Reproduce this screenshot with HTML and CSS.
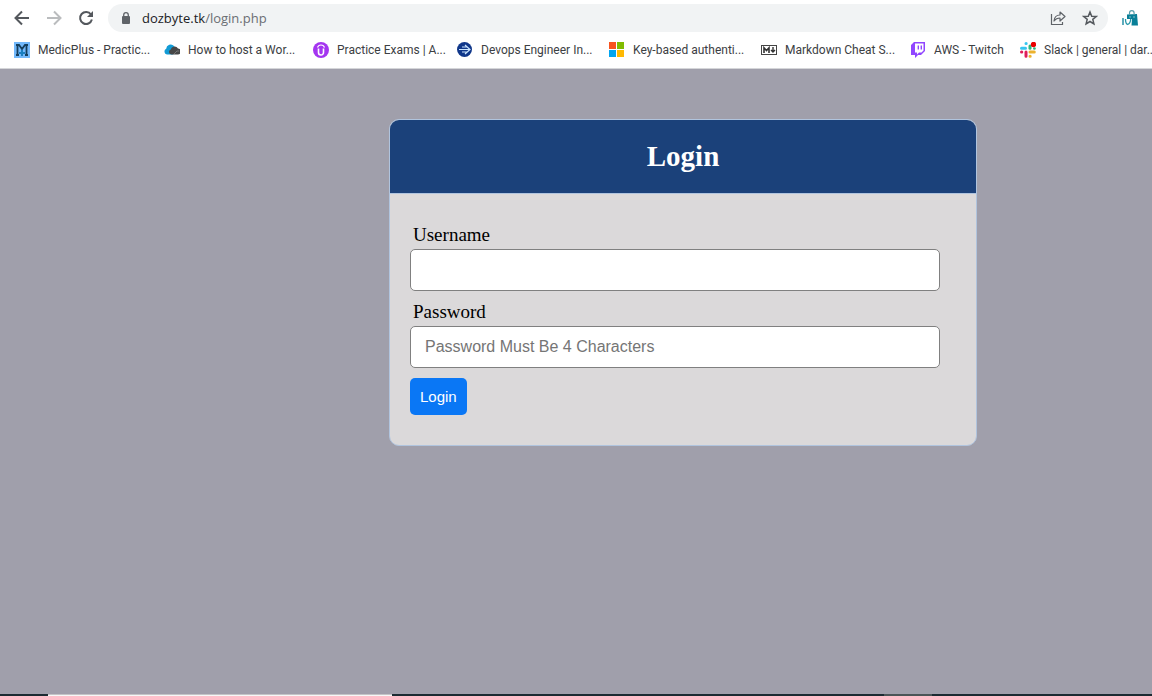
FILE: index.html
```html
<!DOCTYPE html>
<html lang="en">
<head>
<meta charset="utf-8">
<title>Login</title>
<meta name="viewport" content="width=device-width, initial-scale=1">
<link rel="stylesheet" href="styles.css">
</head>
<body>
<header class="browser">
  <div class="toolbar">
    <button class="tool" type="button" aria-label="Back"><svg viewBox="0 0 16 16" width="16" height="16" fill="none" stroke="#54585d" stroke-width="2"><path d="M15 8H2M8 1.500 1.500 8 8 14.500"/></svg></button>
    <button class="tool" type="button" aria-label="Forward"><svg viewBox="0 0 16 16" width="16" height="16" fill="none" stroke="#babcbe" stroke-width="2"><path d="M1 8h13M8 1.500 14.500 8 8 14.500"/></svg></button>
    <button class="tool" type="button" aria-label="Reload"><svg viewBox="0 0 16 16" width="16" height="16"><path d="M13 4.500A6 6 0 1 0 13.900 9.500" fill="none" stroke="#54585d" stroke-width="2"/><path d="M15 1v6H9z" fill="#54585d"/></svg></button>
    <div class="omnibox">
      <svg viewBox="0 0 10 12" width="10" height="12"><rect x="1" y="4" width="8" height="8" rx="1" fill="#5f6368"/><path d="M2.700 5V3a2.300 2.300 0 0 1 4.600 0v2" fill="none" stroke="#5f6368" stroke-width="1.300"/></svg>
      <p class="address">dozbyte.tk<span class="path">/login.php</span></p>
      <button class="tool" type="button" aria-label="Share"><svg viewBox="0 0 16 16" width="16" height="16" fill="none" stroke="#5f6368" stroke-width="1.200"><path d="M1.500 4v10.500h11V12"/><path d="M4 11c.4-4 2.500-6 6-6V2l5 4.500-5 4.500V8C7.500 8 5.500 9 4 11z" stroke-linejoin="round"/></svg></button>
      <button class="tool" type="button" aria-label="Bookmark this page"><svg viewBox="0 0 16 16" width="16" height="16" fill="none" stroke="#54585d" stroke-width="1.500"><path d="m8 2 1.700 4.200 4.600.3-3.500 2.900 1.100 4.500L8 11.500l-3.900 2.400 1.100-4.500-3.500-2.900 4.600-.3z"/></svg></button>
    </div>
    <button class="tool" type="button" aria-label="Shopping extension"><svg viewBox="0 0 16 16" width="16" height="16"><path d="M5 4.500 15 4l1 11.500H9.500L10 9H5z" fill="#087f98"/><path d="M7.500 5V3a2.300 2.300 0 0 1 4.600 0v2" fill="none" stroke="#5a9fad" stroke-width="1.200"/><path d="M1 8v7" stroke="#087f98" stroke-width="1.300"/><path d="M3.500 9c0 3.500.6 5 2.200 5.500 1.500-.6 2.800-2 3-5.500" fill="none" stroke="#2496a9" stroke-width="1.300"/><path d="M8 6.500v1m4-1v1" stroke="#fff"/></svg></button>
  </div>
  <nav class="bookmarks" aria-label="Bookmarks">
    <a class="bookmark" href="#"><svg viewBox="0 0 16 16" width="16" height="16"><path fill="#72b8fb" d="M0 0h16v16H0z"/><path d="M2 3h3l3 4 3-4h3M3.500 3v10M12.500 3v10M2 13h3m6 0h3" fill="none" stroke="#153e5c" stroke-width="1.800"/><path d="M8 8v6M5 11h6" stroke="#197fc0" stroke-width="2"/></svg>MedicPlus - Practic...</a>
    <a class="bookmark" href="#"><svg viewBox="0 0 16 16" width="16" height="16"><path d="M3 12.500a3 3 0 0 1-.8-5.700A4.500 4.500 0 0 1 10 4l2 5-3 3.500z" fill="#129bd5"/><path d="M7 12.500a2.600 2.600 0 0 1-.3-5A4 4 0 0 1 14 6.500a3 3 0 0 1-.5 6z" fill="#474747"/><path d="m10 12 3-3h2" stroke="#777" fill="none"/></svg>How to host a Wor...</a>
    <a class="bookmark" href="#"><svg viewBox="0 0 16 16" width="16" height="16"><circle cx="8" cy="8" r="8" fill="#a435f0"/><path d="M5.500 6.500v4a2.500 2.500 0 0 0 5 0v-4" fill="none" stroke="#fff" stroke-width="1.600"/><path d="M4.500 5.500C5 3.800 6.400 3 8 3s3 .8 3.500 2.500" fill="none" stroke="#fff" stroke-width="1.200"/></svg>Practice Exams | A...</a>
    <a class="bookmark" href="#"><svg viewBox="0 0 16 16" width="16" height="16"><circle cx="7.500" cy="7.500" r="7.500" fill="#10378a"/><path d="M2 7.500h11M5 5h5M5 10h5M8 3l5 4.500L8 12" fill="none" stroke="#cbe6ff" stroke-width="1.200"/></svg>Devops Engineer In...</a>
    <a class="bookmark" href="#"><svg viewBox="0 0 16 16" width="16" height="16"><path fill="#f8531f" d="M0 0h7v7H0z"/><path fill="#80bb01" d="M8 0h7v7H8z"/><path fill="#01a5f1" d="M0 8h7v7H0z"/><path fill="#ffb902" d="M8 8h7v7H8z"/></svg>Key-based authenti...</a>
    <a class="bookmark" href="#"><svg viewBox="0 0 16 16" width="16" height="16"><rect x=".5" y="3.500" width="15" height="9" fill="#fff" stroke="#444"/><path d="M3 11V5.800l2.500 2.700L8 5.800V11" fill="none" stroke="#333" stroke-width="1.600"/><path d="M12 5v5M10 8l2 2 2-2" fill="none" stroke="#333" stroke-width="1.400"/></svg>Markdown Cheat S...</a>
    <a class="bookmark" href="#"><svg viewBox="0 0 16 16" width="16" height="16"><path d="M4 0 1 3v10h4v3l3-3h3l4-4V0z" fill="#9146ff"/><path d="M5 1.500h8.500v7l-2 2H9l-2 2v-2H5z" fill="#fff"/><path d="M8.300 3.500v4m3-4v4" stroke="#9146ff" stroke-width="1.400"/></svg>AWS - Twitch</a>
    <a class="bookmark" href="#"><svg viewBox="0 0 16 16" width="16" height="16" fill="none" stroke-width="3" stroke-linecap="round"><path d="M1.500 6.300h4M6 1.500h.2" stroke="#36c5f0"/><path d="M10 6.300V4" stroke="#2eb67d"/><path d="M14.300 6.500h.2" stroke="#2eb67d" stroke-width="2.500"/><path d="M6 10v4.300M1.500 10h.3" stroke="#e01e5a"/><path d="M10 10h4.300M10 14.300h.2" stroke="#ecb22e"/><circle cx="13.500" cy="2.500" r="2.700" fill="#eb0000"/></svg>Slack | general | dar...</a>
  </nav>
</header>
<main class="page">
  <section class="card">
    <h2 class="card-title">Login</h2>
    <form class="login-form">
      <div class="input-group">
        <label for="username">Username</label>
        <input id="username" name="username" type="text">
      </div>
      <div class="input-group">
        <label for="password">Password</label>
        <input id="password" name="password" type="password" placeholder="Password Must Be 4 Characters">
      </div>
      <button class="btn" type="submit">Login</button>
    </form>
  </section>
</main>
<footer class="taskbar"><span class="active-window"></span><span class="tray"></span></footer>
</body>
</html>
```
FILE: styles.css
```css
* { box-sizing: border-box; margin: 0; }

body {
  display: flex;
  flex-direction: column;
  min-height: 100vh;
  background: #a09fab;
  font-family: "Liberation Serif", "Times New Roman", serif;
  font-size: 19px;
  overflow-x: hidden;
}

svg { display: block; flex: none; }

.browser {
  background: #fff;
  border-bottom: 1px solid #d5d6d9;
  font-family: "Open Sans", "Noto Sans", sans-serif;
}

.toolbar {
  display: flex;
  align-items: center;
  gap: 16px;
  height: 36px;
  padding: 0 14px;
}

.tool { padding: 0; border: 0; background: none; }

.omnibox {
  display: flex;
  flex: 1;
  align-items: center;
  gap: 16px;
  height: 28px;
  margin-left: -2px;
  margin-right: -2px;
  padding: 0 10px 0 13px;
  border-radius: 14px;
  background: #f1f3f4;
}

.address {
  flex: 1;
  margin-left: -5px;
  font-size: 13px;
  line-height: 20px;
  color: #202124;
}

.path { color: #6a6e73; }

.bookmarks {
  display: grid;
  grid-template-columns: 150px 149px 144px 152px 152px 149px 110px auto;
  align-items: center;
  height: 32px;
  padding-left: 14px;
  padding-bottom: 4px;
  overflow: hidden;
}

.bookmark {
  display: flex;
  align-items: center;
  gap: 8px;
  color: #3c4043;
  font-family: Roboto, "Open Sans", sans-serif;
  font-size: 12px;
  line-height: 16px;
  text-decoration: none;
  white-space: nowrap;
}

.page {
  display: grid;
  flex: 1;
  grid-template-columns: minmax(0, 389fr) minmax(0, 588px) minmax(0, 175fr);
  align-items: start;
  padding: 50px 0;
}

.card {
  grid-column: 2;
  overflow: hidden;
  border: 1px solid #b0c4de;
  border-radius: 10px;
  background: #dbd9da;
}

.card-title {
  padding: 20px;
  border-bottom: 1px solid #b0c4de;
  background: #1b417a;
  color: #fff;
  font-size: 29px;
  line-height: 33px;
  text-align: center;
}

.login-form { padding: 20px 20px 30px; }

.input-group { margin: 10px 0; }

.input-group label {
  display: block;
  margin: 3px;
  line-height: 22px;
}

.input-group + .input-group label { margin-top: 0; }

.input-group input {
  display: block;
  width: 97%;
  height: 42px;
  padding: 5px 14px;
  border: 1px solid #808080;
  border-radius: 5px;
  background: #fff;
  font-family: "Liberation Sans", Arial, sans-serif;
  font-size: 16px;
}

.input-group input::placeholder { color: #757575; }

.btn {
  display: block;
  padding: 10px;
  border: 0;
  border-radius: 5px;
  background: #0a77f5;
  color: #fff;
  font-family: "Liberation Sans", Arial, sans-serif;
  font-size: 15px;
  line-height: 17px;
}

.taskbar {
  display: grid;
  grid-template-columns: 48fr 344fr 492fr 48fr 220fr;
  height: 2px;
  background: #1c2b32;
}

.active-window { grid-column: 2; border-top: 1px solid #c4c4c6; background: #f7f7f7; }
.tray { grid-column: 4; background: #4b5557; }
```
